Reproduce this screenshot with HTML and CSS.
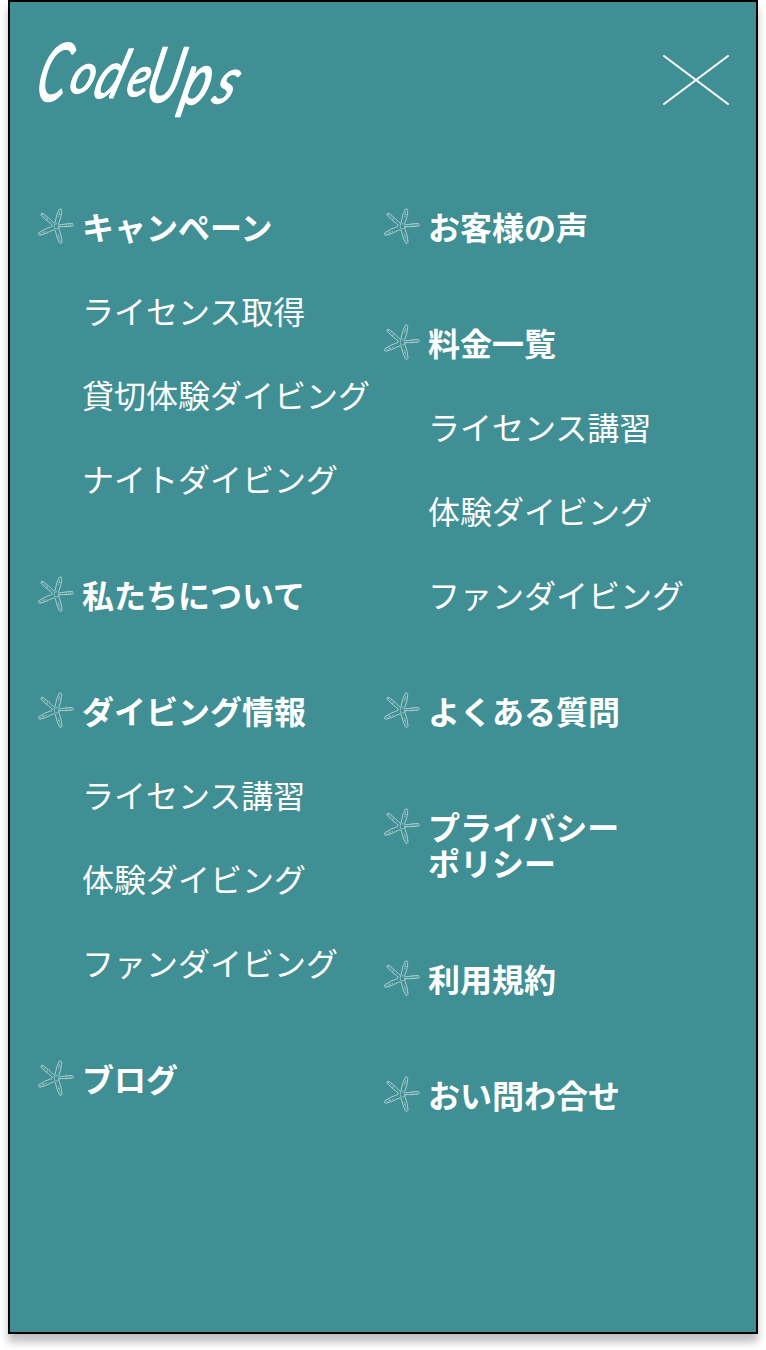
FILE: index.html
```html
<!DOCTYPE html>
<html lang="ja">
<head>
<meta charset="utf-8">
<title>CodeUps</title>
<link rel="stylesheet" href="styles.css">
</head>
<body>
<svg class="defs" width="0" height="0" aria-hidden="true">
  <symbol id="starfish" viewBox="0 0 36 36">
    <g fill="none" stroke="#fff" stroke-width=".65" stroke-linejoin="round">
      <path d="M17 14.8Q18.4 6 21.2 1.3Q23.5-.2 23.8 2.6Q23.5 9 20.7 15.6Q21 16.8 23 16.8Q29 15.4 34.4 15.5Q36.7 16.5 34.7 18Q29 19 21.2 18.6Q20.5 20.2 21.5 22.6Q24 28.5 24 34.3Q23.4 36.6 21.3 34.7Q18.7 29.2 17.3 22.6Q15.7 21.4 13.6 22.6Q8 26 2 27.3Q-.4 26.8 1 24.6Q7 20.4 13.6 18.7Q15 17.2 12.6 15.5Q6.5 11.3 3 7.1Q2.5 4.7 5 5.4Q10.5 9 15.3 14.7Q16.4 15.8 17 14.8Z"/>
      <path d="M20.4 9L22 3M30 17.1L34 16.9M20.4 26L22.7 34M9 23L2 26M10 11.3L4 6.3" stroke-dasharray="1.2 1" stroke-width=".8" opacity=".7"/>
      <path d="M16 16.8l3-1.4 2 2.6-1.4 3-3-.2zM20.5 6l2 .9M28 15.9l.4 2.9M20 29l2-1M5 23l1.1 2.2M8.2 11.9l1.5-1.4" opacity=".7"/>
    </g>
  </symbol>
</svg>
<div class="drawer">
  <header class="header">
    <svg class="logo" viewBox="0 0 208 84" role="img" aria-label="CodeUps">
      <g class="logo-text">
        <text transform="translate(-5 63) skewX(-14) scale(.66 1.12)" font-size="72">C</text>
        <text transform="translate(29 55) skewX(-16) scale(.82 .96)" font-size="58">o</text>
        <text transform="translate(53 60) skewX(-18) scale(.78 1.01)" font-size="66">d</text>
        <text transform="translate(86 58) skewX(-16) scale(.82 1)" font-size="56">e</text>
        <text transform="translate(105 64) skewX(-14) scale(.68 1.06)" font-size="72">U</text>
        <text transform="translate(140 66) skewX(-14) scale(.9 1.22)" font-size="60">p</text>
        <text transform="translate(172 65) skewX(-22) scale(.9 1.14)" font-size="56">s</text>
      </g>
    </svg>
    <button class="close" type="button" aria-label="閉じる">
      <svg viewBox="0 0 66 50" width="66" height="50"><path d="M1 1L65 49M65 1L1 49"/></svg>
    </button>
  </header>
  <nav class="nav">
    <div class="column">
      <section class="group">
        <a class="head"><svg class="star"><use href="#starfish"/></svg><span>キャンペーン</span></a>
        <a class="sub">ライセンス取得</a>
        <a class="sub">貸切体験ダイビング</a>
        <a class="sub">ナイトダイビング</a>
      </section>
      <section class="group">
        <a class="head"><svg class="star"><use href="#starfish"/></svg><span>私たちについて</span></a>
      </section>
      <section class="group">
        <a class="head"><svg class="star"><use href="#starfish"/></svg><span>ダイビング情報</span></a>
        <a class="sub">ライセンス講習</a>
        <a class="sub">体験ダイビング</a>
        <a class="sub">ファンダイビング</a>
      </section>
      <section class="group">
        <a class="head"><svg class="star"><use href="#starfish"/></svg><span>ブログ</span></a>
      </section>
    </div>
    <div class="column">
      <section class="group">
        <a class="head"><svg class="star"><use href="#starfish"/></svg><span>お客様の声</span></a>
      </section>
      <section class="group">
        <a class="head"><svg class="star"><use href="#starfish"/></svg><span>料金一覧</span></a>
        <a class="sub">ライセンス講習</a>
        <a class="sub">体験ダイビング</a>
        <a class="sub">ファンダイビング</a>
      </section>
      <section class="group">
        <a class="head"><svg class="star"><use href="#starfish"/></svg><span>よくある質問</span></a>
      </section>
      <section class="group">
        <a class="head"><svg class="star"><use href="#starfish"/></svg><span>プライバシー<br>ポリシー</span></a>
      </section>
      <section class="group">
        <a class="head"><svg class="star"><use href="#starfish"/></svg><span>利用規約</span></a>
      </section>
      <section class="group">
        <a class="head"><svg class="star"><use href="#starfish"/></svg><span>おい問わ合せ</span></a>
      </section>
    </div>
  </nav>
</div>
</body>
</html>
```
FILE: styles.css
```css
* { box-sizing: border-box; }
body {
  margin: 0;
  height: 1350px;
  overflow: hidden;
  background: #fff;
  font-family: "Noto Sans CJK JP", sans-serif;
}
.defs { display: block; }
.drawer {
  width: 750px;
  height: 1334px;
  margin: 0 8px;
  border: 2px solid #000;
  background: #408f95;
  box-shadow: 0 8px 8px rgba(0, 0, 0, .25);
  color: #fff;
}
.header {
  display: flex;
  justify-content: space-between;
  align-items: flex-start;
  padding: 36px 27px 0 28px;
  height: 206px;
}
.logo { width: 208px; height: 84px; overflow: visible; }
.logo-text {
  fill: #fff;
  stroke: #fff;
  stroke-width: 1.2;
  stroke-linejoin: round;
  font-family: Lato, sans-serif;
  font-style: italic;
  font-weight: 400;
}
.close {
  margin-top: 17px;
  padding: 0;
  border: 0;
  background: none;
  line-height: 0;
}
.close path { stroke: #fff; stroke-width: 2; stroke-linecap: round; fill: none; }
.nav {
  display: grid;
  grid-template-columns: 346px 1fr;
  padding-left: 28px;
}
.column { display: flex; flex-direction: column; gap: 80px; }
.group { display: flex; flex-direction: column; gap: 48px; }
.head {
  display: flex;
  gap: 8px;
  font-size: 32px;
  line-height: 36px;
  font-weight: 700;
}
.star { flex: none; width: 36px; height: 36px; opacity: .85; }
.sub {
  padding-left: 44px;
  font-size: 32px;
  line-height: 36px;
  font-weight: 400;
  white-space: nowrap;
}
```
